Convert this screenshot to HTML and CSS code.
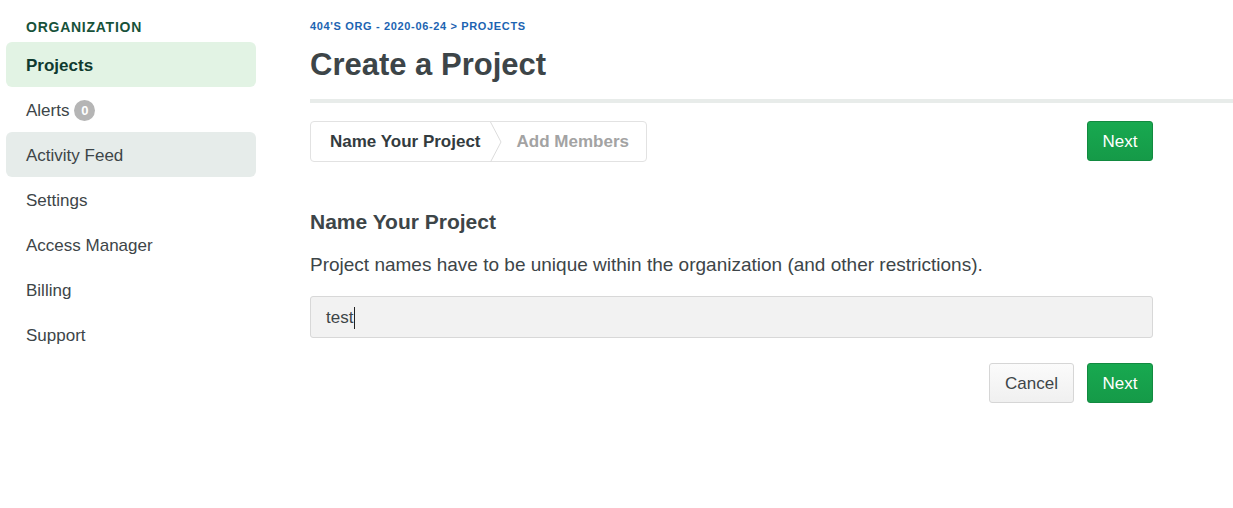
FILE: index.html
```html
<!DOCTYPE html>
<html>
<head>
<meta charset="utf-8">
<link rel="stylesheet" href="styles.css">
</head>
<body>
<div class="layout">
  <aside class="sidebar">
    <div class="side-title">ORGANIZATION</div>
    <nav class="nav">
      <a class="nav-item active">Projects</a>
      <a class="nav-item">Alerts <span class="badge">0</span></a>
      <a class="nav-item hover">Activity Feed</a>
      <a class="nav-item">Settings</a>
      <a class="nav-item">Access Manager</a>
      <a class="nav-item">Billing</a>
      <a class="nav-item">Support</a>
    </nav>
  </aside>
  <main class="main">
    <div class="crumbs">404'S ORG - 2020-06-24 &gt; PROJECTS</div>
    <h1 class="title">Create a Project</h1>
    <div class="rule"></div>
    <div class="content">
      <div class="wizard-bar">
        <div class="steps">
          <div class="step current">Name Your Project</div>
          <svg class="chev" width="12" height="40" viewBox="0 0 12 40"><polyline points="0.5,0 11,20 0.5,40" fill="none" stroke="#dcdcdc" stroke-width="1"/></svg>
          <div class="step todo">Add Members</div>
        </div>
        <button class="btn btn-green">Next</button>
      </div>
      <h2 class="section">Name Your Project</h2>
      <p class="desc">Project names have to be unique within the organization (and other restrictions).</p>
      <div class="input"><span>test</span><span class="caret"></span></div>
      <div class="actions">
        <button class="btn btn-default">Cancel</button>
        <button class="btn btn-green">Next</button>
      </div>
    </div>
  </main>
</div>
</body>
</html>
```

FILE: styles.css
```css
html, body {
  margin: 0;
  padding: 0;
  background: #fff;
  font-family: "Liberation Sans", Arial, sans-serif;
  color: #3d4548;
}
.layout {
  display: flex;
  width: 1233px;
}
.sidebar {
  width: 250px;
  padding: 18px 0 0 6px;
  flex-shrink: 0;
}
.side-title {
  font-size: 14px;
  font-weight: bold;
  letter-spacing: 0.75px;
  color: #17523a;
  padding-left: 20px;
  height: 18px;
  line-height: 18px;
  margin-bottom: 6px;
}
.nav {
  display: flex;
  flex-direction: column;
}
.nav-item {
  display: flex;
  align-items: center;
  height: 45px;
  padding-left: 20px;
  padding-top: 2px;
  box-sizing: border-box;
  border-radius: 6px;
  font-size: 17px;
  color: #3d4548;
}
.nav-item.active {
  background: #e2f3e4;
  font-weight: bold;
  color: #0f3a2f;
}
.nav-item.hover {
  background: #e6ecea;
}
.badge {
  display: inline-flex;
  align-items: center;
  justify-content: center;
  width: 21px;
  height: 21px;
  border-radius: 50%;
  background: #b5b5b5;
  color: #fff;
  font-size: 13px;
  font-weight: bold;
  margin-left: 5px;
}
.main {
  flex: 1;
  margin-left: 54px;
  padding-top: 19px;
}
.crumbs {
  font-size: 11px;
  font-weight: bold;
  color: #1c64b2;
  letter-spacing: 0.65px;
  height: 14px;
  line-height: 14px;
}
.title {
  margin: 11px 0 0;
  font-size: 31px;
  font-weight: bold;
  color: #3d4548;
  line-height: 42px;
  height: 42px;
}
.rule {
  margin-top: 13px;
  height: 4px;
  background: #e8ecea;
}
.content {
  width: 843px;
}
.wizard-bar {
  margin-top: 18px;
  display: flex;
  justify-content: space-between;
  align-items: flex-start;
}
.steps {
  display: flex;
  align-items: center;
  height: 38px;
  border: 1px solid #e2e2e2;
  border-radius: 4px;
  padding-top: 1px;
}
.step {
  font-size: 17px;
  font-weight: bold;
}
.step.current {
  color: #333b3e;
  padding: 0 9px 0 19px;
}
.step.todo {
  color: #a3a3a3;
  padding: 0 17px 0 15px;
}
.chev {
  display: block;
  margin-top: -1px;
}
.btn {
  font-family: "Liberation Sans", Arial, sans-serif;
  font-size: 17px;
  height: 40px;
  border-radius: 3px;
  padding: 2px 0 0;
  cursor: pointer;
}
.btn-green {
  background: linear-gradient(#18a950, #159a48);
  border: 1px solid #128a40;
  color: #fff;
  width: 66px;
}
.btn-default {
  background: linear-gradient(#fbfbfb, #f0f0f0);
  border: 1px solid #d6d6d6;
  color: #3d4548;
  width: 85px;
}
.section {
  margin: 47px 0 0;
  font-size: 21px;
  font-weight: bold;
  line-height: 26px;
  color: #3d4548;
}
.desc {
  margin: 19px 0 0;
  font-size: 19px;
  line-height: 22px;
  color: #3d4548;
}
.input {
  margin-top: 20px;
  height: 40px;
  background: #f2f2f2;
  border: 1px solid #d8d8d8;
  border-radius: 3px;
  display: flex;
  align-items: center;
  padding-left: 15px;
  padding-top: 2px;
  box-sizing: border-box;
  height: 42px;
  font-size: 17px;
  color: #3d4548;
}
.caret {
  display: inline-block;
  width: 1px;
  height: 22px;
  background: #222;
  margin-left: 1px;
}
.actions {
  margin-top: 25px;
  display: flex;
  justify-content: flex-end;
  gap: 13px;
}
```
